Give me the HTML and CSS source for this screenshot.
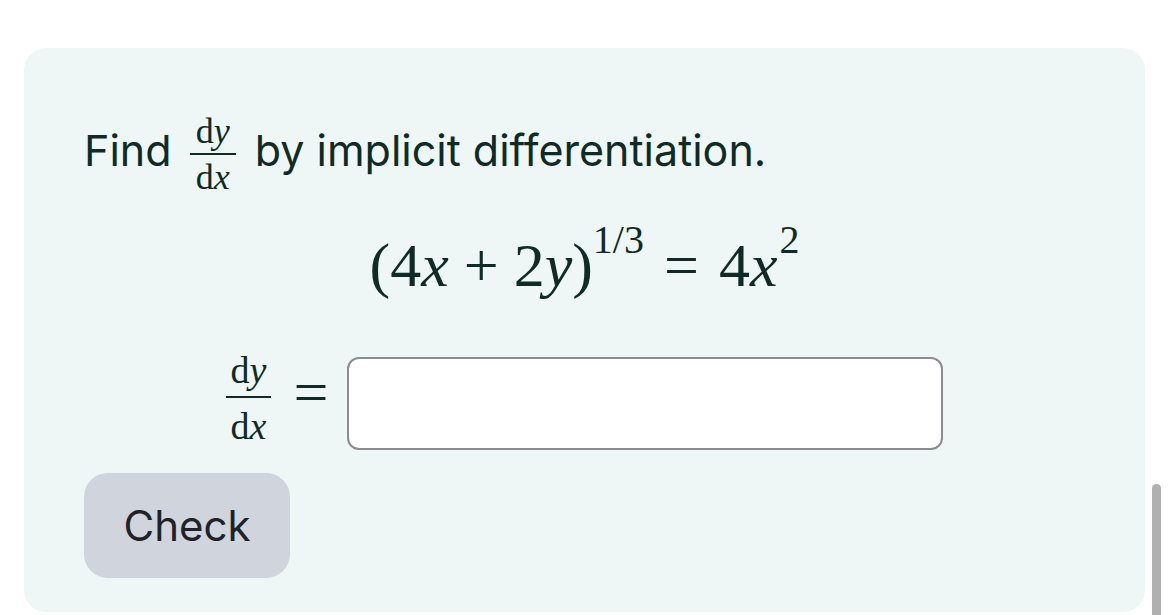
FILE: index.html
```html
<!DOCTYPE html>
<html>
<head>
<meta charset="utf-8">
<link rel="stylesheet" href="styles.css">
</head>
<body>
<div class="card">
  <p class="prompt">Find <span class="frac frac-sm"><span class="num">d<i>y</i></span><span class="bar"></span><span class="den">d<i>x</i></span></span> by implicit differentiation.</p>
  <div class="display eq">(4<i>x</i><span class="bin">+</span>2<i>y</i>)<sup class="exp">1/3</sup><span class="rel">=</span>4<i>x</i><sup class="exp sq">2</sup></div>
  <div class="display answer">
    <span class="frac frac-md"><span class="num">d<i>y</i></span><span class="bar"></span><span class="den">d<i>x</i></span></span>
    <span class="rel rel-md">=</span>
    <span class="box"></span>
  </div>
  <button class="check">Check</button>
</div>
<div class="scroll"></div>
</body>
</html>
```
FILE: styles.css
```css
html, body {
  margin: 0;
  padding: 0;
  background: #ffffff;
  overflow: hidden;
}
body {
  width: 1170px;
  height: 615px;
  position: relative;
  font-family: Inter, "Noto Sans", sans-serif;
  color: #0f2b26;
}
.card {
  margin: 48px 0 0 24px;
  width: 1121px;
  height: 564px;
  box-sizing: border-box;
  background: #eef7f5;
  border-radius: 22px;
  padding: 64px 60px 0 60px;
  display: flex;
  flex-direction: column;
  align-items: flex-start;
}
.prompt {
  margin: 0;
  font-size: 43px;
  line-height: 76px;
  height: 76px;
  white-space: nowrap;
}
.frac {
  display: inline-flex;
  flex-direction: column;
  align-items: center;
  vertical-align: middle;
  font-family: "Liberation Serif", serif;
  line-height: 1;
}
.frac i, .eq i {
  font-style: italic;
}
.frac-sm {
  font-size: 36px;
  margin: 0 7px 0 6px;
  position: relative;
  top: 0;
}
.frac-sm .num { padding: 0 6px 4px; }
.frac-sm .den { padding: 4px 6px 0; }
.bar {
  display: block;
  align-self: stretch;
  height: 2px;
  background: #0f2b26;
}
.display {
  align-self: stretch;
  display: flex;
  justify-content: center;
  align-items: center;
}
.eq {
  font-family: "Liberation Serif", serif;
  font-size: 62px;
  line-height: 1;
  margin-top: 46px;
  white-space: nowrap;
}
.bin { margin: 0 15px; }
.rel { margin: 0 20px; }
.exp {
  font-size: 40px;
  align-self: flex-start;
  margin-top: -14px;
  margin-left: 0;
  line-height: 1;
}
.sq { margin-top: -14px; margin-left: 2px; }
.answer {
  margin-top: 49px;
}
.frac-md {
  font-size: 38px;
}
.frac-md .num { padding: 0 5px 7px; }
.frac-md .den { padding: 9px 5px 0; }
.rel-md {
  font-family: "Liberation Serif", serif;
  font-size: 62px;
  margin: 0 19px 0 22px;
  line-height: 1;
  position: relative;
  top: -6px;
}
.box {
  width: 596px;
  height: 93px;
  box-sizing: border-box;
  background: #ffffff;
  border: 2.5px solid #8c8c91;
  border-radius: 12px;
  margin-top: 12px;
}
.check {
  margin-top: 23px;
  width: 206px;
  height: 105px;
  border: none;
  border-radius: 24px;
  background: #cfd4dd;
  color: #1f2328;
  font-family: Inter, "Noto Sans", sans-serif;
  font-size: 42px;
  padding: 0;
}
.scroll {
  position: absolute;
  left: 1152px;
  top: 484px;
  width: 9px;
  height: 140px;
  border-radius: 5px;
  background: #b0b0b0;
}
```
